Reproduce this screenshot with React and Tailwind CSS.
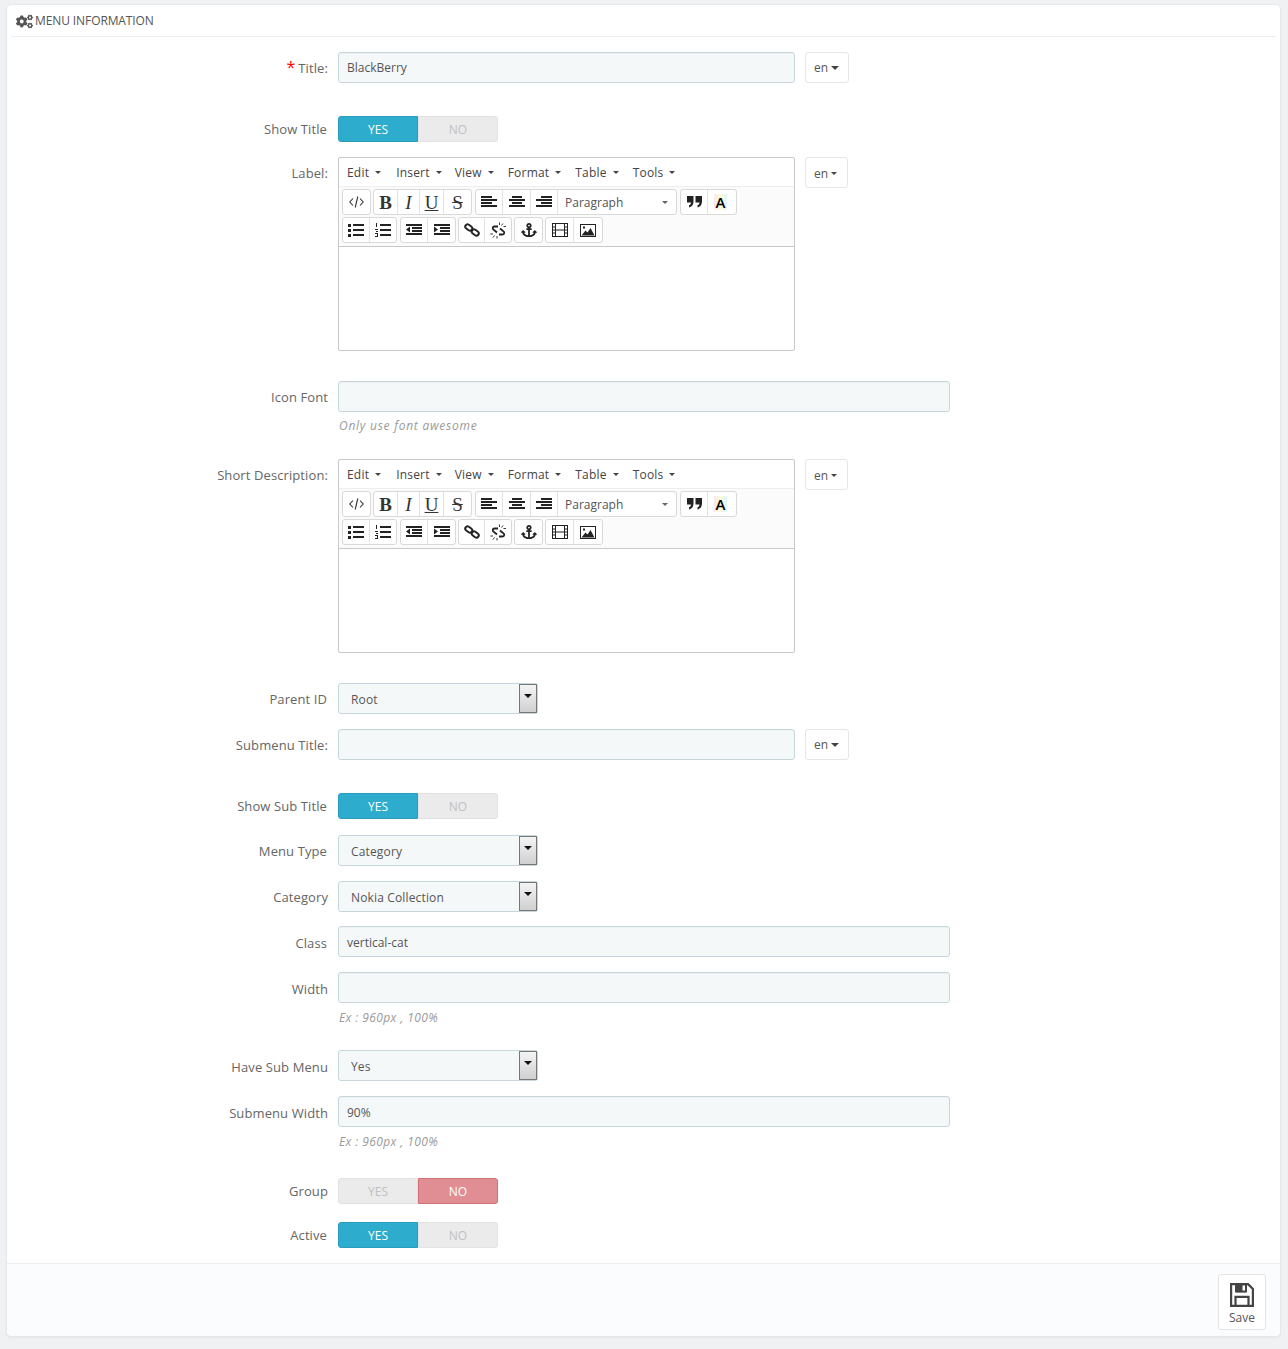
import React from "react";
import { FaCogs, FaAnchor } from "react-icons/fa";

const Caret = ({ c = "border-t-[#444]" }) => (
  <span className={`inline-block w-0 h-0 border-x-[3px] border-x-transparent border-t-[3px] ${c}`} />
);

const Row = ({ label, className = "", pr = "", lt = "pt-[7px]", children }) => (
  <div className={`flex items-start ${className}`}>
    <div className={lt}>
      <div className={`w-[321px] shrink-0 text-right text-[13px] leading-[18px] tracking-[0.1px] text-[#666] ${pr}`}>{label}</div>
    </div>
    <div className="ml-[10px]">{children}</div>
  </div>
);

const Input = ({ w, value = "", low }) => (
  <div className={`${w} h-[31px] bg-[#f5f8f9] border border-[#c7d6db] rounded-[3px] px-2 text-[12px] ${low ? "leading-[31px]" : "leading-[29px]"} text-[#555] shadow-[inset_0_1px_1px_rgba(0,0,0,0.03)]`}>{value}</div>
);

const Lang = ({ w = "w-[44px]", thick, low }) => (
  <div className={`${w} h-[31px] ml-[10px] bg-white border border-[#e6e6e6] rounded-[3px] flex items-center pl-2 gap-[3px] text-[12px] text-[#555] ${low ? "pt-[2px]" : ""}`}>
    en {thick ? <span className="inline-block w-0 h-0 border-x-[4px] border-x-transparent border-t-[4px] border-t-[#444]" /> : <Caret />}
  </div>
);

const Switch = ({ yes = true }) => (
  <div className="flex w-[160px] h-[26px] text-[12px] leading-[26px] text-center">
    <div className={`w-[80px] rounded-l-[3px] ${yes ? "bg-[#2eacce] text-white border border-[#2a9dbc]" : "bg-[#ebebeb] text-[#c0c0c0] border border-[#e2e2e2]"}`}><div className="h-[24px] leading-[26px]">YES</div></div>
    <div className={`w-[80px] rounded-r-[3px] ${yes ? "bg-[#ebebeb] text-[#c0c0c0] border border-[#e2e2e2]" : "bg-[#e08e94] text-white border border-[#cf7278]"}`}><div className="h-[24px] leading-[26px]">NO</div></div>
  </div>
);

const Select = ({ value }) => (
  <div className="relative w-[200px] h-[31px] bg-[#f5f8f9] border border-[#c7d6db] rounded-[3px] pl-3 text-[12px] leading-[31px] tracking-[0.15px] text-[#555]">
    {value}
    <div className="absolute right-0 top-0 w-[18px] h-[29px] bg-gradient-to-b from-[#f4f4f4] to-[#d0d0d0] border border-[#777] flex items-start justify-center pt-[9px]">
      <span className="w-0 h-0 border-x-[4px] border-x-transparent border-t-[4px] border-t-[#111]" />
    </div>
  </div>
);

const Help = ({ children, track, mt = "mt-[5px]" }) => (
  <div className={`${mt} pl-[1px] text-[12px] leading-[18px] italic text-[#9a9a9a] ${track}`}>{children}</div>
);

const Lines = ({ rows }) => (
  <svg width="16" height="12" viewBox="0 0 16 12" fill="#222">
    {rows.map((r, i) => <rect key={i} x={r[0]} y={r[1]} width={r[2]} height="2" />)}
  </svg>
);

const Btn = ({ w = "w-[28px]", children }) => (
  <div className={`${w} h-[24px] flex items-center justify-center border-r border-[#e2e2e2] last:border-r-0`}>{children}</div>
);

const Group = ({ children }) => (
  <div className="flex h-[26px] border border-[#d9d9d9] rounded-[3px] bg-white">{children}</div>
);

const Letter = ({ className, children }) => (
  <span className={`text-[19px] leading-none text-[#333] [font-family:'Liberation_Serif',serif] ${className}`}>{children}</span>
);

const Code = () => (
  <svg width="15" height="12" viewBox="0 0 15 12" fill="none" stroke="#333" strokeWidth="1.1">
    <path d="M4 2.5L0.8 6L4 9.5M11 2.5L14.2 6L11 9.5M8.8 0.5L6.2 11.5" />
  </svg>
);
const Quote = () => (
  <svg width="15" height="13" viewBox="0 0 15 13" fill="#222">
    <path d="M0 0h6.500v5.500C6.500 9 4.500 11 2 11.500V9.300C3.200 9 3.900 8 4 6.500H0zM8.500 0H15v5.500c0 3.500-2 5.500-4.500 6V9.300c1.200-.3 1.900-1.300 2-2.800h-4z" />
  </svg>
);
const Bullets = () => (
  <svg width="16" height="14" viewBox="0 0 16 14" fill="#222">
    <rect x="0" y="1" width="3" height="3" /><rect x="0" y="6" width="3" height="3" /><rect x="0" y="11" width="3" height="3" />
    <rect x="5" y="1" width="11" height="2" /><rect x="5" y="6" width="11" height="2" /><rect x="5" y="11" width="11" height="2" />
  </svg>
);
const Numbers = () => (
  <svg width="16" height="14" viewBox="0 0 16 14" fill="#222">
    <rect x="1" y="0" width="1" height="4" /><rect x="0" y="6" width="3" height="1" /><rect x="1" y="8" width="2" height="1" /><rect x="0" y="10" width="3" height="1" /><rect x="2" y="11" width="1" height="2" /><rect x="0" y="13" width="3" height="1" />
    <rect x="5" y="1" width="11" height="2" /><rect x="5" y="6" width="11" height="2" /><rect x="5" y="11" width="11" height="2" />
  </svg>
);
const Indent = ({ out }) => (
  <svg width="16" height="12" viewBox="0 0 16 12" fill="#222">
    <rect x="0" y="0" width="16" height="2" /><rect x="6" y="3" width="10" height="2" /><rect x="6" y="6" width="10" height="2" /><rect x="0" y="9" width="16" height="2" />
    <path d={out ? "M4 2.500v6L0 5.500z" : "M0 2.500v6l4-3z"} />
  </svg>
);
const Link = () => (
  <svg width="16" height="14" viewBox="0 0 16 14" fill="none" stroke="#222" strokeWidth="2">
    <rect x="1" y="2.200" width="7.500" height="4.600" rx="2.300" transform="rotate(35 4.750 4.500)" />
    <rect x="7.500" y="7.200" width="7.500" height="4.600" rx="2.300" transform="rotate(35 11.250 9.500)" />
  </svg>
);
const Unlink = () => (
  <svg width="17" height="17" viewBox="0 0 17 17" fill="none" stroke="#222">
    <path d="M8 4.500H4.500C2.500 4.500 2 7 4 8l3 2.500M9 12.500h3.500c2 0 2.500-2.500.5-3.500l-3-2.500" strokeWidth="1.800" />
    <path d="M9.500 0.500v2.500M13 1.500L11.500 3.500M16 4.500h-2.500M0.500 12h2.500M3 15.500l1.500-2M7 16.500V14" strokeWidth="0.900" />
  </svg>
);
const Film = () => (
  <svg width="16" height="14" viewBox="0 0 16 14" fill="none" stroke="#222" strokeWidth="1">
    <rect x="0.500" y="0.500" width="15" height="13" /><path d="M3.500 0.500v13M12.500 0.500v13M0.500 4h3M0.500 7h3M0.500 10h3M12.500 4h3M12.500 7h3M12.500 10h3M3.500 7h9" />
  </svg>
);
const Picture = () => (
  <svg width="16" height="13" viewBox="0 0 16 13">
    <rect x="0.500" y="0.500" width="15" height="12" fill="#fff" stroke="#222" />
    <path d="M1.500 11.500l4-5 2 2 3-4.500 4 7.500z" fill="#222" /><rect x="3" y="2.500" width="2" height="2" fill="#222" />
  </svg>
);
const Floppy = () => (
  <svg width="24" height="24" viewBox="0 0 24 24" fill="none" stroke="#444" strokeWidth="2.200">
    <path d="M1.100 1.100h17l4.800 4.800v17H1.100z" />
    <path d="M5.500 22.900v-9h13v9" />
    <path d="M5.500 1.100h11v8h-11z" fill="#444" strokeWidth="1" />
    <rect x="12.500" y="2.500" width="2.500" height="5" fill="#fff" stroke="none" />
  </svg>
);

const Editor = () => (
  <div className="w-[457px] h-[194px] border border-[#c9c9c9] rounded-[2px] bg-white flex flex-col">
    <div className="h-[29px] flex items-center pl-2 pt-[1px] text-[12px] text-[#444] border-b border-[#eeeeee]">
      {["Edit", "Insert", "View", "Format", "Table", "Tools"].map((m, i) => (
        <span key={m} className={`flex items-center gap-[6px] tracking-[0.2px] ${i === 0 ? "mr-[15px]" : i === 1 ? "mr-[13px]" : "mr-[14px]"}`}>{m}<Caret /></span>
      ))}
    </div>
    <div className="h-[60px] bg-[#fbfbfb] pl-[3px] pt-[2px] flex flex-col gap-[2px] border-b border-[#c9c9c9]">
      <div className="flex">
        <Group><Btn w="w-[27px]"><Code /></Btn></Group>
        <div className="ml-[2px]"><Group>
          <Btn w="w-[24px]"><Letter className="font-bold">B</Letter></Btn>
          <Btn w="w-[22px]"><Letter className="italic">I</Letter></Btn>
          <Btn w="w-[24px]"><Letter className="underline">U</Letter></Btn>
          <Btn w="w-[27px]"><Letter className="line-through">S</Letter></Btn>
        </Group></div>
        <div className="ml-[3px]"><Group>
          <Btn w="w-[27px]"><Lines rows={[[0,0,11],[0,3,16],[0,6,11],[0,9,16]]} /></Btn>
          <Btn w="w-[28px]"><Lines rows={[[3,0,10],[0,3,16],[3,6,10],[0,9,16]]} /></Btn>
          <Btn w="w-[27px]"><Lines rows={[[5,0,11],[0,3,16],[5,6,11],[0,9,16]]} /></Btn>
          <div className="w-[118px] flex items-center justify-between pl-[7px] pr-[8px] pt-[1px] text-[12px] text-[#555]">Paragraph<Caret c="border-t-[#666]" /></div>
        </Group></div>
        <div className="ml-[3px]"><Group>
          <Btn w="w-[27px]"><Quote /></Btn>
          <Btn w="w-[28px]"><span className="mr-[3px] text-[15px] font-semibold leading-[16px] px-[2px] text-black bg-gradient-to-r from-[#fde8ef] via-[#fdfbd8] to-[#dff4fb]">A</span></Btn>
        </Group></div>
      </div>
      <div className="flex">
        <Group><Btn w="w-[27px]"><Bullets /></Btn><Btn w="w-[26px]"><Numbers /></Btn></Group>
        <div className="ml-[3px]"><Group><Btn w="w-[27px]"><Indent out /></Btn><Btn w="w-[27px]"><Indent /></Btn></Group></div>
        <div className="ml-[2px]"><Group><Btn w="w-[26px]"><Link /></Btn><Btn w="w-[26px]"><Unlink /></Btn></Group></div>
        <div className="ml-[2px]"><Group><Btn w="w-[27px]"><FaAnchor className="text-[#222] text-[16px]" /></Btn></Group></div>
        <div className="ml-[2px]"><Group><Btn><Film /></Btn><Btn><Picture /></Btn></Group></div>
      </div>
    </div>
    <div className="flex-1" />
  </div>
);

export default function App() {
  return (
    <div className="min-h-[1349px] bg-[#eff1f2] px-[6px] pt-[4px] [font-family:'Open_Sans',sans-serif]">
      <div className="w-[1275px] h-[1333px] bg-white border border-[#e6e8ea] rounded-[5px] flex flex-col shadow-[0_1px_2px_rgba(0,0,0,0.05)]">
        <div className="mx-[4px] h-[32px] border-b border-[#eeeeee] flex items-center gap-[2px] pl-[5px] pt-[1px] text-[12px] text-[#555]">
          <FaCogs className="text-[17px] text-[#555]" />
          <span className="tracking-[-0.1px]">MENU INFORMATION</span>
        </div>

        <div className="flex-1">
          <Row className="mt-[15px]" label={<><span className="text-[#f00] text-[16px] leading-none mr-[3px]">*</span>Title:</>} >
            <div className="flex"><Input w="w-[457px]" value="BlackBerry" /><Lang thick /></div>
          </Row>
          <Row className="mt-[33px]" lt="pt-[4px]" label="Show Title" pr="pr-[1px]"><Switch /></Row>
          <Row className="mt-[15px]" label="Label:">
            <div className="flex"><Editor /><Lang w="w-[43px]" low /></div>
          </Row>
          <Row className="mt-[30px]" label="Icon Font">
            <Input w="w-[612px]" />
            <Help track="tracking-[0.75px]">Only use font awesome</Help>
          </Row>
          <Row className="mt-[24px]" label="Short Description:">
            <div className="flex"><Editor /><Lang w="w-[43px]" low /></div>
          </Row>
          <Row className="mt-[30px]" label="Parent ID" pr="pr-[1px]"><Select value="Root" /></Row>
          <Row className="mt-[15px]" label="Submenu Title:">
            <div className="flex"><Input w="w-[457px]" /><Lang thick /></div>
          </Row>
          <Row className="mt-[33px]" lt="pt-[4px]" label="Show Sub Title" pr="pr-[1px]"><Switch /></Row>
          <Row className="mt-[16px]" label="Menu Type" pr="pr-[1px]"><Select value="Category" /></Row>
          <Row className="mt-[15px]" label="Category"><Select value="Nokia Collection" /></Row>
          <Row className="mt-[14px]" lt="pt-[8px]" label="Class" pr="pr-[1px]"><Input w="w-[612px]" value="vertical-cat" low /></Row>
          <Row className="mt-[15px]" lt="pt-[8px]" label="Width">
            <Input w="w-[612px]" />
            <Help track="tracking-[0.4px]" mt="mt-[6px]">Ex : 960px , 100%</Help>
          </Row>
          <Row className="mt-[23px]" lt="pt-[8px]" label="Have Sub Menu"><Select value="Yes" /></Row>
          <Row className="mt-[15px]" lt="pt-[8px]" label="Submenu Width">
            <Input w="w-[612px]" value="90%" low />
            <Help track="tracking-[0.4px]" mt="mt-[6px]">Ex : 960px , 100%</Help>
          </Row>
          <Row className="mt-[27px]" lt="pt-[4px]" label="Group"><Switch yes={false} /></Row>
          <Row className="mt-[18px]" lt="pt-[4px]" label="Active" pr="pr-[1px]"><Switch /></Row>
        </div>

        <div className="h-[73px] bg-[#fbfcfd] border-t border-[#eeeeee] rounded-b-[5px] flex justify-end pt-[10px] pr-[14px]">
          <div className="w-[48px] h-[56px] bg-white border border-[#e3e3e3] rounded-[3px] flex flex-col items-center pt-[8px] text-[12px] text-[#555]">
            <Floppy />
            <span className="mt-[3px] leading-[16px]">Save</span>
          </div>
        </div>
      </div>
    </div>
  );
}
